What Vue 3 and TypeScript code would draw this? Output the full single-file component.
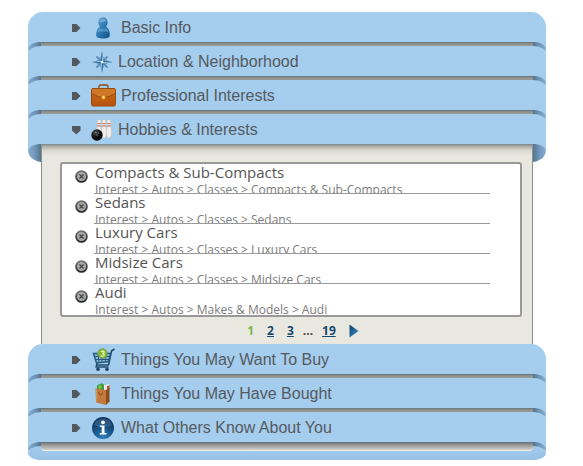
<script setup lang="ts">
import { ref } from 'vue'

interface Section {
  id: string
  title: string
  narrow?: boolean
}

interface Interest {
  name: string
  path: string[]
}

const sections: Section[] = [
  { id: 'basic', title: 'Basic Info' },
  { id: 'location', title: 'Location & Neighborhood', narrow: true },
  { id: 'professional', title: 'Professional Interests' },
  { id: 'hobbies', title: 'Hobbies & Interests', narrow: true },
  { id: 'buy', title: 'Things You May Want To Buy' },
  { id: 'bought', title: 'Things You May Have Bought' },
  { id: 'others', title: 'What Others Know About You' },
]

const interests = ref<Interest[]>([
  { name: 'Compacts & Sub-Compacts', path: ['Interest', 'Autos', 'Classes', 'Compacts & Sub-Compacts'] },
  { name: 'Sedans', path: ['Interest', 'Autos', 'Classes', 'Sedans'] },
  { name: 'Luxury Cars', path: ['Interest', 'Autos', 'Classes', 'Luxury Cars'] },
  { name: 'Midsize Cars', path: ['Interest', 'Autos', 'Classes', 'Midsize Cars'] },
  { name: 'Audi', path: ['Interest', 'Autos', 'Makes & Models', 'Audi'] },
])

const open = ref('hobbies')

function toggle(id: string) {
  open.value = open.value === id ? '' : id
}

function remove(name: string) {
  interests.value = interests.value.filter((i) => i.name !== name)
}

// A heading tucks under the curl of the one before it when that one is closed.
function tucked(index: number) {
  return index > 0 && sections[index - 1].id !== open.value
}
</script>

<template>
  <main class="accordion">
    <svg class="defs" width="0" height="0" aria-hidden="true">
      <defs>
        <linearGradient id="curl" x1="0" y1="0" x2="1" y2="0">
          <stop offset="0" stop-color="#86acd0" />
          <stop offset="0.5" stop-color="#7198bb" />
          <stop offset="1" stop-color="#55748f" />
        </linearGradient>
        <linearGradient id="person" x1="0" y1="0" x2="1" y2="1">
          <stop offset="0" stop-color="#5fa3d0" />
          <stop offset="0.5" stop-color="#2b78b0" />
          <stop offset="1" stop-color="#124f80" />
        </linearGradient>
        <linearGradient id="leather" x1="0" y1="0" x2="0" y2="1">
          <stop offset="0" stop-color="#c9701f" />
          <stop offset="1" stop-color="#b8500c" />
        </linearGradient>
        <radialGradient id="ball" cx="0.35" cy="0.3" r="0.7">
          <stop offset="0" stop-color="#555" />
          <stop offset="0.5" stop-color="#151515" />
          <stop offset="1" stop-color="#000" />
        </radialGradient>
        <radialGradient id="info" cx="0.5" cy="0.9" r="0.9">
          <stop offset="0" stop-color="#2f7dbb" />
          <stop offset="0.5" stop-color="#185385" />
          <stop offset="1" stop-color="#0c3157" />
        </radialGradient>
        <linearGradient id="knob" x1="0" y1="0" x2="0" y2="1">
          <stop offset="0" stop-color="#777" />
          <stop offset="1" stop-color="#222" />
        </linearGradient>
        <linearGradient id="next" x1="0" y1="0" x2="1" y2="1">
          <stop offset="0" stop-color="#0d3e66" />
          <stop offset="1" stop-color="#3c93cf" />
        </linearGradient>
      </defs>
    </svg>

    <section v-for="(s, index) in sections" :key="s.id" class="section">
      <h3 class="heading">
        <button
          type="button"
          class="toggle"
          :class="{ tucked: tucked(index) }"
          :aria-expanded="open === s.id"
          @click="toggle(s.id)"
        >
          <svg class="marker" width="10" height="10" viewBox="0 0 10 10" aria-hidden="true">
            <path v-if="open === s.id" d="M1 1H9.500V5.500L5.250 9.500L1 5.500Z" fill="#53585c" />
            <path v-else d="M1 1H5.500L9.500 5L5.500 9H1Z" fill="#53585c" />
          </svg>
          <svg
            class="icon"
            :width="s.narrow ? 22 : 25"
            height="24"
            :viewBox="s.narrow ? '0 0 22 24' : '0 0 25 24'"
            aria-hidden="true"
          >
            <g v-if="s.id === 'basic'">
              <path d="M12 1.500C15 1.500 16.600 3.600 16.600 6.300C16.600 8 16 9.500 15 10.600C17.300 12 19 15.600 18.800 19.500C18.600 21.800 16 22.500 12 22.500C8 22.500 5.400 21.800 5.200 19.500C5 15.600 6.700 12 9 10.600C8 9.500 7.400 8 7.400 6.300C7.400 3.600 9 1.500 12 1.500Z" fill="url(#person)" />
              <path d="M8.300 6C8.300 4 10 2.700 12 2.700C14 2.700 15.200 4 15.400 5.600C13 5.400 11 7 8.300 6Z" fill="#8fc3e6" opacity=".6" />
              <path d="M8.600 12.200C10 13 14 13 15.400 12.200C16.600 13.200 17.400 15 17.800 16.500C14 14.800 9 16 6.200 16.500C6.600 14.800 7.400 13.200 8.600 12.200Z" fill="#7bb7df" opacity=".45" />
            </g>
            <g v-else-if="s.id === 'location'">
              <path d="M5.500 6.500L10 11M16.500 6.500L12 11M5.500 17.500L10 13M16.500 17.500L12 13" stroke="#4b7ca4" stroke-width="1.500" />
              <circle cx="11" cy="12" r="4.800" fill="none" stroke="#6fa0c6" stroke-width="1" />
              <path d="M11 1L12.700 10.300L21.500 12L12.700 13.700L11 23L9.300 13.700L0.500 12L9.300 10.300Z" fill="#34709f" />
              <path d="M11 3V12L12.500 10.500ZM20 12H11L12.500 13.500ZM11 21V12L9.500 13.500ZM2 12H11L9.500 10.500Z" fill="#8fc0e2" />
              <circle cx="11" cy="12" r="1.300" fill="#e8f6ff" />
            </g>
            <g v-else-if="s.id === 'professional'">
              <path d="M8 5V2.500Q8 1 9.500 1H15.500Q17 1 17 2.500V5" fill="none" stroke="#8b4a18" stroke-width="1.300" />
              <rect x="0.500" y="4.500" width="24" height="17.500" rx="1.500" fill="url(#leather)" stroke="#9c4a10" />
              <path d="M1 5H24V9.500Q18 13.500 12.500 13.500Q7 13.500 1 9.500Z" fill="#cf7927" />
              <path d="M1 9.500Q7 13.500 12.500 13.500Q18 13.500 24 9.500" fill="none" stroke="#8f400b" stroke-width=".8" />
              <circle cx="12.500" cy="13.500" r="2" fill="#f7a92a" />
              <circle cx="12.500" cy="13" r="1" fill="#ffe78a" />
            </g>
            <g v-else-if="s.id === 'hobbies'">
              <g v-for="x in [8, 13, 18]" :key="x">
                <path :d="`M${x} 1.500C${x + 2.6} 1.500 ${x + 1.8} 5 ${x + 1.5} 8C${x + 3.3} 12 ${x + 2.8} 17 ${x + 1.4} 20H${x - 1.4}C${x - 2.8} 17 ${x - 3.3} 12 ${x - 1.5} 8C${x - 1.8} 5 ${x - 2.6} 1.500 ${x} 1.500Z`" fill="#f1eeea" stroke="#b5b9bd" stroke-width=".5" />
                <path :d="`M${x - 1.5} 5.500H${x + 1.5}M${x - 1.5} 7.800H${x + 1.5}`" stroke="#d8694e" stroke-width="1.200" />
              </g>
              <circle cx="6" cy="17" r="5.700" fill="url(#ball)" />
              <circle cx="5" cy="14.500" r=".6" fill="#aaa" />
              <circle cx="7.500" cy="15" r=".6" fill="#aaa" />
              <circle cx="6" cy="17" r=".6" fill="#aaa" />
            </g>
            <g v-else-if="s.id === 'buy'">
              <path d="M23.500 1L20.500 3L17.500 17H6" fill="none" stroke="#224d70" stroke-width="1.700" />
              <path d="M2.500 5.500H19.500L17.500 13.500L5.500 15Z" fill="#8fbad9" stroke="#245a84" stroke-width="1.500" />
              <path d="M3 8.500H19M4 11.500H18.300M7 6L8 14M11 6V14M15 6L14.500 14" stroke="#245a84" />
              <path d="M6 15L5 19H17.500" fill="none" stroke="#224d70" stroke-width="1.300" />
              <circle cx="7" cy="21.300" r="1.800" fill="#1d4566" />
              <circle cx="16" cy="21.300" r="1.800" fill="#1d4566" />
              <circle cx="11.500" cy="5.500" r="4.800" fill="#86b93b" stroke="#62932a" stroke-width=".6" />
              <path d="M9.800 3.500Q13.500 2.200 13 4.500Q12.500 5.500 11.200 5.500Q13.800 5.700 13 7.500Q12 8.800 9.800 7.800" fill="none" stroke="#eef9c8" stroke-width="1.200" />
            </g>
            <g v-else-if="s.id === 'bought'">
              <path d="M6 6Q5 2 9 2.500Q11 0 13 3Q16 1 18 7L14 9L7 9Z" fill="#3d9a3b" />
              <circle cx="9" cy="5" r="1.800" fill="#77c64b" />
              <path d="M13 3L18 2V8H13Z" fill="#e9eef0" />
              <path d="M16 4L18.500 3.500V7H16Z" fill="#ce4a36" />
              <path d="M4.500 6.500L15 8V23L5 20.500Z" fill="#c17a3c" />
              <path d="M15 8L18.500 5.500V19.500L15 23Z" fill="#8c4d1e" />
              <path d="M7.500 10Q7.500 13 9.500 13Q11.500 13 11.500 10.500" fill="none" stroke="#8e5120" />
              <path d="M5.500 8L6 19.500" stroke="#d99b60" />
            </g>
            <g v-else>
              <circle cx="12" cy="12" r="11" fill="url(#info)" />
              <path d="M3 9A9.500 9.500 0 0 1 21 9Q12 13 3 9Z" fill="#7aa5c8" opacity=".25" />
              <circle cx="12" cy="6.300" r="1.900" fill="#fff" />
              <path d="M8.800 9.500H13.500V17H15.500V18.500H8.800V17H10.700V11H8.800Z" fill="#fff" />
            </g>
          </svg>
          <span class="title">{{ s.title }}</span>
        </button>
        <svg v-for="side in ['left', 'right']" :key="side" class="ear" :class="side" width="13" height="18" viewBox="0 0 13 18" aria-hidden="true">
          <path d="M0 0H13V18C5 17 0 12 0 6Z" fill="url(#curl)" />
          <path d="M0 0H13C6 0 1 2.500 0 7Z" fill="#a5cdee" />
        </svg>
      </h3>

      <div v-if="open === s.id" class="panel">
        <ul class="list">
          <li v-for="item in interests" :key="item.name" class="row">
            <button type="button" class="remove" :aria-label="`Remove ${item.name}`" @click="remove(item.name)">
              <svg width="13" height="13" viewBox="0 0 13 13" aria-hidden="true">
                <circle cx="6.500" cy="6.500" r="6.300" fill="url(#knob)" />
                <circle cx="6.500" cy="6.500" r="4.500" fill="#a8a8a8" />
                <path d="M4.500 4.500L8.500 8.500M8.500 4.500L4.500 8.500" stroke="#444" stroke-width="1.300" />
              </svg>
            </button>
            <div class="text">
              <div class="name">{{ item.name }}</div>
              <div class="path">{{ item.path.join(' > ') }}</div>
            </div>
          </li>
        </ul>
        <nav class="pages" aria-label="Pages">
          <span class="current" aria-current="page">1</span>
          <a href="#2">2</a>
          <a href="#3">3</a>
          <span class="dots">...</span>
          <a href="#19">19</a>
          <a href="#next" class="next" aria-label="Next page">
            <svg width="10" height="14" viewBox="0 0 10 14" aria-hidden="true">
              <path d="M0.500 0.500L9.500 7L0.500 13.500Z" fill="url(#next)" />
            </svg>
          </a>
        </nav>
      </div>
      <div v-else class="slot"></div>
    </section>
    <div class="base"></div>
  </main>
</template>

<style>
body {
  background: #fff;
}
</style>

<style scoped>
.accordion {
  box-sizing: border-box;
  padding: 12px 37px 6px 28px;
  font-family: "Liberation Sans", Arial, sans-serif;
  color: #555a5e;
}

.defs {
  position: absolute;
}

.section {
  position: relative;
}

.heading {
  position: relative;
  margin: 0;
  font-size: 16px;
  font-weight: 400;
}

.toggle {
  display: flex;
  align-items: center;
  box-sizing: border-box;
  width: 100%;
  height: 30px;
  padding: 2px 0 0 43px;
  border: 0;
  border-radius: 15px 15px 0 0;
  background: #a5cdee;
  color: inherit;
  font: inherit;
  text-align: left;
  cursor: pointer;
}

.toggle.tucked {
  border-radius: 13px 13px 0 0 / 8px 8px 0 0;
}

.marker {
  flex: none;
  margin-right: 10px;
}

.icon {
  flex: none;
  margin-right: 5px;
}

.title {
  line-height: 20px;
}

.ear {
  position: absolute;
  top: 100%;
}

.ear.left {
  left: 0;
}

.ear.right {
  right: 0;
  transform: scaleX(-1);
}

.slot {
  height: 4px;
  margin: 0 13px;
  background: linear-gradient(#626f78, #8b8f8b 40%, #9b9c96);
}

.section:last-of-type .slot {
  position: relative;
  z-index: 1;
  box-sizing: border-box;
  height: 9px;
  margin-bottom: -5px;
  border-bottom: 1px solid #f1f0e9;
  border-radius: 0 0 4px 4px;
  background: linear-gradient(#626f78, #9b9b96 40%, #d0cfc8);
}

.base {
  position: relative;
  height: 14px;
  border-radius: 13px / 7px;
  background: linear-gradient(#a2caec, #98c2e7);
}

.panel {
  margin: 0 13px;
  padding: 18px 10px 4px 18px;
  border: solid #8e8e8b;
  border-width: 0 1px;
  background: linear-gradient(#7d8487, #b5b5ae 3px, #dddcd4 7px, #e9e8e0 12px);
}

.list {
  margin: 0;
  padding: 0 0 1px;
  border: 2px solid #999;
  border-radius: 3px;
  background: #fff;
  list-style: none;
}

.row {
  display: flex;
  align-items: flex-start;
  padding: 0 30px 0 13px;
}

.remove {
  display: flex;
  margin: 6px 6px 0 0;
  padding: 0;
  border: 0;
  background: none;
  cursor: pointer;
}

.text {
  box-sizing: border-box;
  flex: 1;
  height: 30px;
  overflow: hidden;
  border-bottom: 1px solid #999;
  font-family: "Open Sans", "Noto Sans", sans-serif;
}

.row:last-child .text {
  border-bottom: 0;
}

.name {
  padding-left: 1px;
  font-size: 15px;
  line-height: 16px;
  color: #555;
}

.path {
  padding-left: 1px;
  font-size: 12px;
  line-height: 20px;
  color: #7c7c7c;
}

.pages {
  display: flex;
  align-items: center;
  justify-content: center;
  gap: 13px;
  padding-top: 5px;
  padding-left: 24px;
  font: bold 12px/18px "Open Sans", "Noto Sans", sans-serif;
  color: #444;
}

.pages a {
  color: #174a70;
}

.pages .current {
  color: #7ab648;
}

.dots {
  margin: 0 -4px;
}

.next {
  display: flex;
}
</style>
